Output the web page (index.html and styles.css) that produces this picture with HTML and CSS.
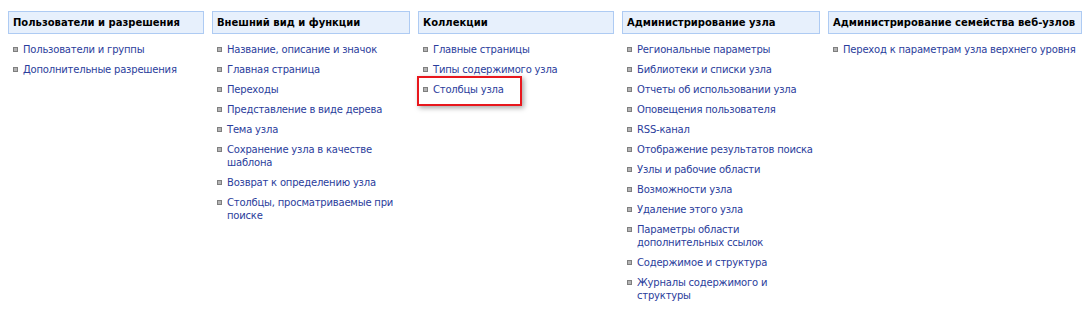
FILE: index.html
```html
<!DOCTYPE html>
<html lang="ru">
<head>
    <meta charset="UTF-8">
    <title>Параметры узла</title>
    <link rel="stylesheet" href="styles.css">
</head>
<body>
    <div class="settings">
        <div class="group w196">
            <h3 class="group-title">Пользователи и разрешения</h3>
            <ul class="links">
                <li><a href="#">Пользователи и группы</a></li>
                <li><a href="#">Дополнительные разрешения</a></li>
            </ul>
        </div>
        <div class="group w198">
            <h3 class="group-title">Внешний вид и функции</h3>
            <ul class="links">
                <li><a href="#">Название, описание и значок</a></li>
                <li><a href="#">Главная страница</a></li>
                <li><a href="#">Переходы</a></li>
                <li><a href="#">Представление в виде дерева</a></li>
                <li><a href="#">Тема узла</a></li>
                <li><a href="#">Сохранение узла в качестве шаблона</a></li>
                <li><a href="#">Возврат к определению узла</a></li>
                <li><a href="#">Столбцы, просматриваемые при поиске</a></li>
            </ul>
        </div>
        <div class="group w196">
            <h3 class="group-title">Коллекции</h3>
            <ul class="links">
                <li><a href="#">Главные страницы</a></li>
                <li><a href="#">Типы содержимого узла</a></li>
                <li class="highlight"><a href="#">Столбцы узла</a></li>
            </ul>
        </div>
        <div class="group w198">
            <h3 class="group-title">Администрирование узла</h3>
            <ul class="links">
                <li><a href="#">Региональные параметры</a></li>
                <li><a href="#">Библиотеки и списки узла</a></li>
                <li><a href="#">Отчеты об использовании узла</a></li>
                <li><a href="#">Оповещения пользователя</a></li>
                <li><a href="#">RSS-канал</a></li>
                <li><a href="#">Отображение результатов поиска</a></li>
                <li><a href="#">Узлы и рабочие области</a></li>
                <li><a href="#">Возможности узла</a></li>
                <li><a href="#">Удаление этого узла</a></li>
                <li><a href="#">Параметры области дополнительных ссылок</a></li>
                <li><a href="#">Содержимое и структура</a></li>
                <li><a href="#">Журналы содержимого и структуры</a></li>
            </ul>
        </div>
        <div class="group w254">
            <h3 class="group-title">Администрирование семейства веб-узлов</h3>
            <ul class="links">
                <li><a href="#">Переход к параметрам узла верхнего уровня</a></li>
            </ul>
        </div>
    </div>
</body>
</html>
```

FILE: styles.css
```css
body {
    margin: 0;
    padding: 11px 0 0 8px;
    background-color: #fff;
    font-family: "DejaVu Sans", Tahoma, sans-serif;
    font-size: 10px;
    color: #000;
}

.settings {
    display: flex;
    align-items: flex-start;
    gap: 8px;
}

.group {
    flex: none;
}

.w196 { width: 196px; }
.w198 { width: 198px; }
.w254 { width: 254px; }

.group-title {
    margin: 0;
    height: 21px;
    line-height: 21px;
    padding: 0 4px;
    background-color: #e7f0fc;
    border: 1px solid #aecbf3;
    font-size: 10px;
    font-weight: bold;
    white-space: nowrap;
}

/* link list under each header */
.links {
    list-style: none;
    margin: 0;
    padding: 9px 0 0 5px;
}

.links li {
    position: relative;
    padding: 0 0 7px 10px;
    line-height: 13px;
    letter-spacing: -0.2px;
}

.links li::before {
    content: "";
    position: absolute;
    left: 0;
    top: 4px;
    width: 3px;
    height: 3px;
    background-color: #b4b4b4;
    border: 1px solid #7f7f7f;
}

.links a {
    color: #2a3d9c;
    text-decoration: none;
}

.links a:hover {
    text-decoration: underline;
}

/* red annotation frame around the selected link */
.highlight::after {
    content: "";
    position: absolute;
    left: -6px;
    top: -7px;
    width: 101px;
    height: 26px;
    border: 2px solid #e8171d;
    box-shadow: 2px 2px 5px rgba(0, 0, 0, 0.35);
}
```
